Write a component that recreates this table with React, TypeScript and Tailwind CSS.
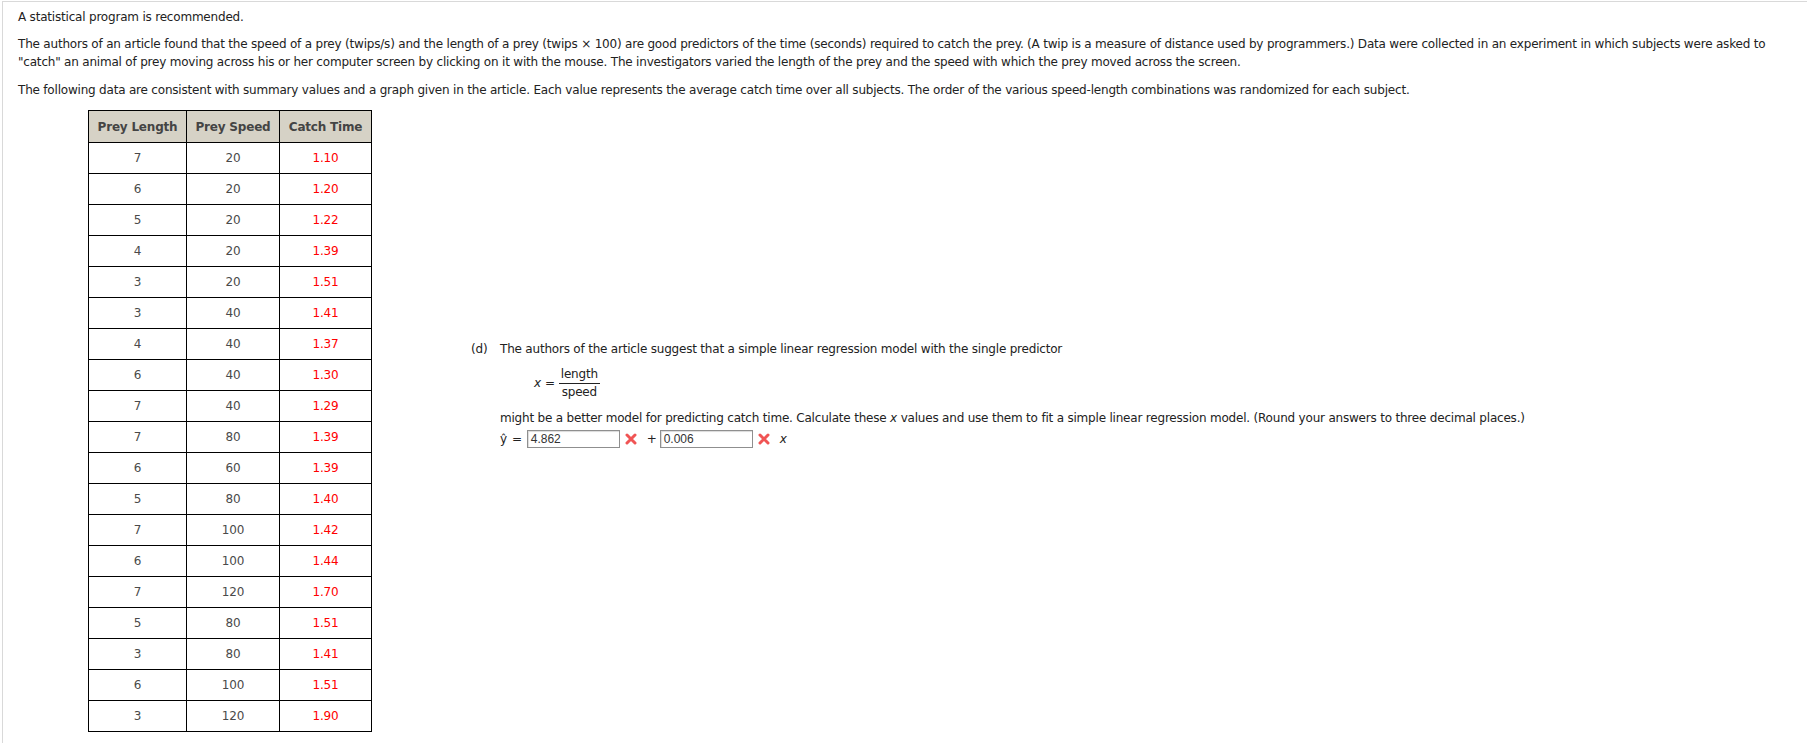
import React from "react";

const rows: [number, number, string][] = [
  [7, 20, "1.10"],
  [6, 20, "1.20"],
  [5, 20, "1.22"],
  [4, 20, "1.39"],
  [3, 20, "1.51"],
  [3, 40, "1.41"],
  [4, 40, "1.37"],
  [6, 40, "1.30"],
  [7, 40, "1.29"],
  [7, 80, "1.39"],
  [6, 60, "1.39"],
  [5, 80, "1.40"],
  [7, 100, "1.42"],
  [6, 100, "1.44"],
  [7, 120, "1.70"],
  [5, 80, "1.51"],
  [3, 80, "1.41"],
  [6, 100, "1.51"],
  [3, 120, "1.90"],
];

const WrongMark = () => (
  <svg width="12" height="12" viewBox="0 0 12 12" className="ml-[5px] mr-[4px] inline-block">
    <path d="M2 2 L10 10 M10 2 L2 10" stroke="#f05454" strokeWidth="3" strokeLinecap="round" />
  </svg>
);

const AnswerBox = ({ value }: { value: string }) => (
  <span className="inline-flex h-[18px] w-[93px] items-center border border-[#8f8f8f] bg-white pl-[3px] font-['Liberation_Sans',Arial,sans-serif] text-[12px] tracking-normal text-[#333] shadow-[inset_1px_1px_1px_rgba(0,0,0,0.15)]">
    {value}
  </span>
);

export default function App() {
  return (
    <div className="min-h-screen bg-white font-['DejaVu_Sans',Verdana,sans-serif] text-[12px] leading-[18px] tracking-[-0.2px] text-[#222]">
      <div className="ml-[2px] mt-[1px] min-h-[742px] border-l border-t border-[#d9d9d9] pl-[15px] pr-[8px] pt-[6px]">
        <p>A statistical program is recommended.</p>
        <p className="mt-[9px]">
          The authors of an article found that the speed of a prey (twips/s) and the length of a prey (twips × 100) are good predictors of the time (seconds) required to catch the prey. (A twip is a measure of distance used by programmers.) Data were collected in an experiment in which subjects were asked to "catch" an animal of prey moving across his or her computer screen by clicking on it with the mouse. The investigators varied the length of the prey and the speed with which the prey moved across the screen.
        </p>
        <p className="mt-[10px]">
          The following data are consistent with summary values and a graph given in the article. Each value represents the average catch time over all subjects. The order of the various speed-length combinations was randomized for each subject.
        </p>

        <div className="mt-[11px] flex items-center">
          <table className="ml-[70px] w-[284px] shrink-0 table-fixed border-collapse text-center">
            <thead>
              <tr className="h-[32px] bg-[#d6d2c6] font-bold text-[#444]">
                <th className="w-[98px] border border-black">Prey Length</th>
                <th className="w-[93px] border border-black">Prey Speed</th>
                <th className="border border-black">Catch Time</th>
              </tr>
            </thead>
            <tbody>
              {rows.map(([len, speed, time], i) => (
                <tr key={i} className="h-[31px]">
                  <td className="border border-black text-[#4a4a4a]">{len}</td>
                  <td className="border border-black text-[#4a4a4a]">{speed}</td>
                  <td className="border border-black text-[#ff0000]">{time}</td>
                </tr>
              ))}
            </tbody>
          </table>

          <div className="mb-[55px] ml-[99px] flex">
            <span className="w-[29px] shrink-0">(d)</span>
            <div>
              <p>The authors of the article suggest that a simple linear regression model with the single predictor</p>
              <div className="ml-[34px] mt-[8px] flex items-center">
                <span className="italic">x</span>
                <span className="ml-[4px] mr-[4px]">=</span>
                <span className="inline-flex flex-col items-center">
                  <span className="border-b border-[#222] px-[2px] leading-[17px]">length</span>
                  <span className="leading-[17px]">speed</span>
                </span>
              </div>
              <p className="mt-[8px]">
                might be a better model for predicting catch time. Calculate these <span className="italic">x</span> values and use them to fit a simple linear regression model. (Round your answers to three decimal places.)
              </p>
              <div className="mt-[3px] flex items-center">
                <span>ŷ</span>
                <span className="mx-[5px]">=</span>
                <AnswerBox value="4.862" />
                <WrongMark />
                <span className="ml-[6px] mr-[3px]">+</span>
                <AnswerBox value="0.006" />
                <WrongMark />
                <span className="ml-[6px] italic">x</span>
              </div>
            </div>
          </div>
        </div>
      </div>
    </div>
  );
}
